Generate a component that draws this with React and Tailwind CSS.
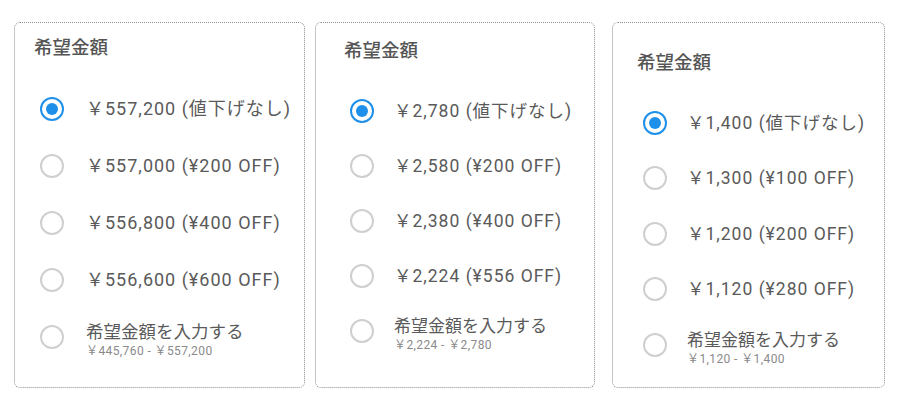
import React from "react";

const FONT = "font-['Roboto','Noto_Sans_CJK_JP',sans-serif]";

const cards = [
  {
    wrap: "w-[291px] ml-[14px]",
    pt: "pt-[13px]",
    titlePl: "pl-[19px]",
    rowPl: "pl-[25px]",
    rowH: "h-[57px]",
    gap: "gap-[22px]",
    text: "text-[17.5px]",
    price: "text-[18px] tracking-[1px]",
    options: [
      { label: "￥557,200 (値下げなし)", selected: true },
      { label: "￥557,000 (¥200 OFF)" },
      { label: "￥556,800 (¥400 OFF)" },
      { label: "￥556,600 (¥600 OFF)" },
    ],
    range: "￥445,760 - ￥557,200",
  },
  {
    wrap: "w-[280px] ml-[10px]",
    pt: "pt-[16px]",
    titlePl: "pl-[28px]",
    rowPl: "pl-[34px]",
    rowH: "h-[55px]",
    gap: "gap-[20px]",
    text: "text-[17px]",
    price: "text-[17.5px] tracking-[1px]",
    options: [
      { label: "￥2,780 (値下げなし)", selected: true },
      { label: "￥2,580 (¥200 OFF)" },
      { label: "￥2,380 (¥400 OFF)" },
      { label: "￥2,224 (¥556 OFF)" },
    ],
    range: "￥2,224 - ￥2,780",
  },
  {
    wrap: "w-[273px] ml-[17px]",
    pt: "pt-[28px]",
    titlePl: "pl-[24px]",
    rowPl: "pl-[30px]",
    rowH: "h-[55.5px]",
    gap: "gap-[20px]",
    text: "text-[17px]",
    price: "text-[17.5px] tracking-[1px]",
    options: [
      { label: "￥1,400 (値下げなし)", selected: true },
      { label: "￥1,300 (¥100 OFF)" },
      { label: "￥1,200 (¥200 OFF)" },
      { label: "￥1,120 (¥280 OFF)" },
    ],
    range: "￥1,120 - ￥1,400",
  },
];

function Radio({ selected }) {
  if (selected) {
    return (
      <span className="flex h-[24px] w-[24px] shrink-0 items-center justify-center rounded-full border-[2.5px] border-[#1e90ea]">
        <span className="h-[12px] w-[12px] rounded-full bg-[#1e90ea]" />
      </span>
    );
  }
  return (
    <span className="h-[24px] w-[24px] shrink-0 rounded-full border-2 border-[#cfcfcf]" />
  );
}

function Card({ c }) {
  return (
    <div
      className={`${c.wrap} h-[366px] shrink-0 rounded-[6px] border-[1.5px] border-dotted border-[#8c8c8c] ${c.pt} flex flex-col`}
    >
      <div className={`${c.titlePl} text-[18.5px] leading-[24px] font-medium text-[#555555]`}>
        希望金額
      </div>
      <div className="mt-[20px] flex flex-col">
        {c.options.map((o, i) => (
          <div key={i} className={`${c.rowH} ${c.rowPl} ${c.gap} flex items-center`}>
            <Radio selected={o.selected} />
            <span className={`${c.price} leading-[22px] text-[#5a5a5a] whitespace-nowrap`}>{o.label}</span>
          </div>
        ))}
        <div className={`${c.rowH} ${c.rowPl} ${c.gap} flex items-center`}>
          <Radio />
          <div className="flex flex-col pt-[6px]">
            <span className={`${c.text} leading-[22px] text-[#5a5a5a] whitespace-nowrap`}>希望金額を入力する</span>
            <span className="text-[12px] leading-[16px] tracking-[0.4px] text-[#8a8a8a] whitespace-nowrap">{c.range}</span>
          </div>
        </div>
      </div>
    </div>
  );
}

export default function App() {
  return (
    <div className={`${FONT} h-[409px] w-[900px] bg-white flex items-start pt-[22px]`}>
      {cards.map((c, i) => (
        <Card key={i} c={c} />
      ))}
    </div>
  );
}
